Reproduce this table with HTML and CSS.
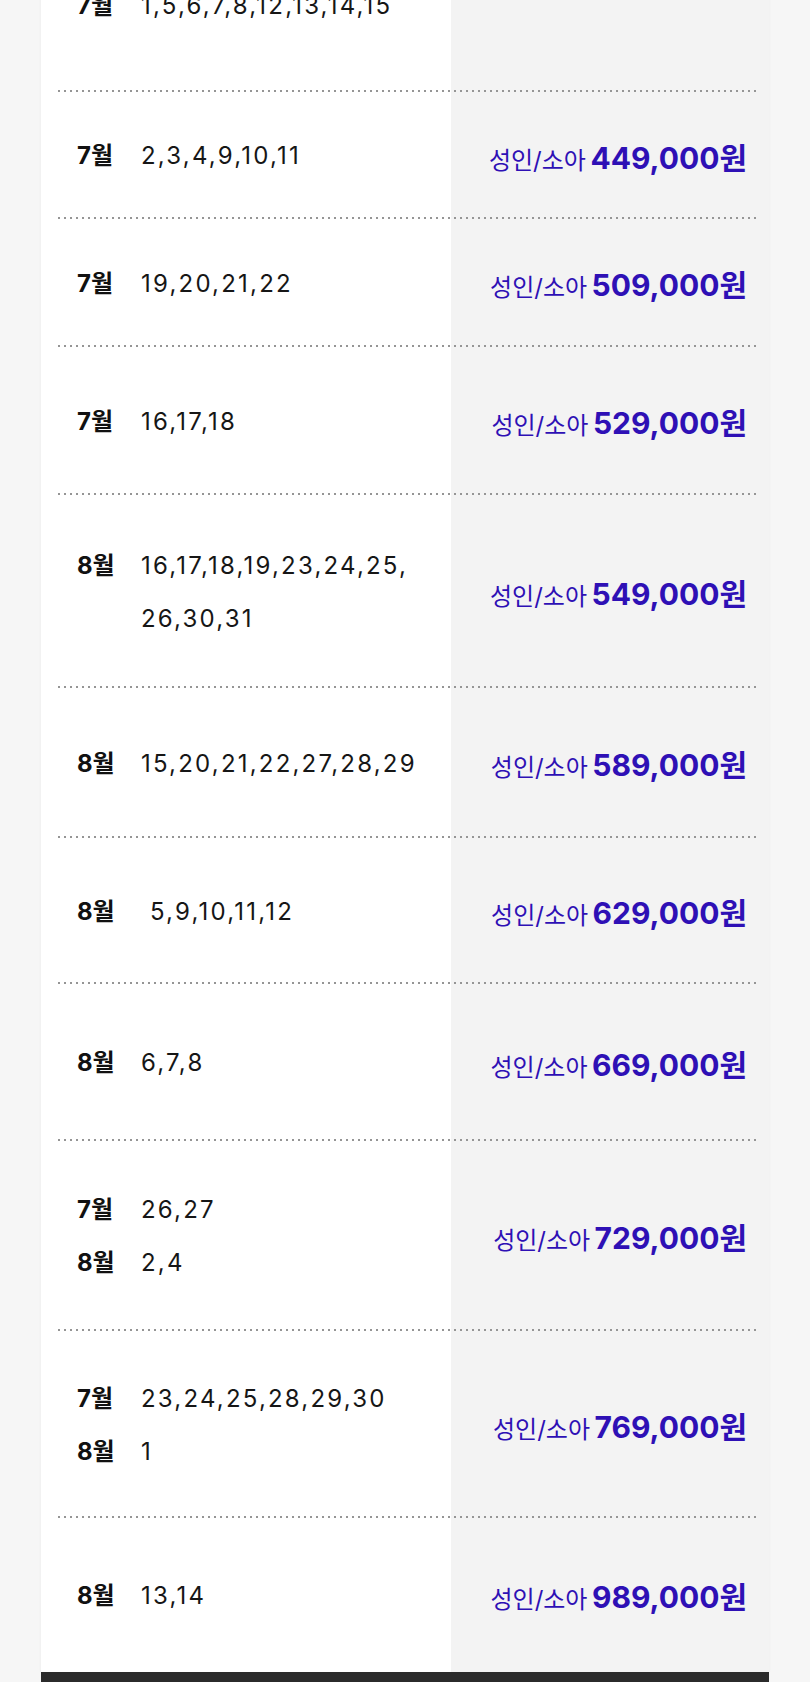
FILE: index.html
```html
<!DOCTYPE html>
<html lang="ko">
<head>
    <meta charset="UTF-8" />
    <title>출발일별 요금</title>
    <link rel="stylesheet" href="styles.css">
</head>
<body>
<div class="price-table">
    <div class="row">
        <div class="dates">
            <div class="line"><span class="mon">7월</span><span class="days">1,5,6,7,8,12,13,14,15</span></div>
        </div>
        <div class="price"></div>
    </div>
    <div class="row">
        <div class="dates">
            <div class="line"><span class="mon">7월</span><span class="days">2,3,4,9,10,11</span></div>
        </div>
        <div class="price"><span class="who">성인/소아</span> <strong>449,000원</strong></div>
    </div>
    <div class="row">
        <div class="dates">
            <div class="line"><span class="mon">7월</span><span class="days">19,20,21,22</span></div>
        </div>
        <div class="price"><span class="who">성인/소아</span> <strong>509,000원</strong></div>
    </div>
    <div class="row">
        <div class="dates">
            <div class="line"><span class="mon">7월</span><span class="days">16,17,18</span></div>
        </div>
        <div class="price"><span class="who">성인/소아</span> <strong>529,000원</strong></div>
    </div>
    <div class="row">
        <div class="dates">
            <div class="line"><span class="mon">8월</span><span class="days">16,17,18,19,23,24,25,<br>26,30,31</span></div>
        </div>
        <div class="price"><span class="who">성인/소아</span> <strong>549,000원</strong></div>
    </div>
    <div class="row">
        <div class="dates">
            <div class="line"><span class="mon">8월</span><span class="days">15,20,21,22,27,28,29</span></div>
        </div>
        <div class="price"><span class="who">성인/소아</span> <strong>589,000원</strong></div>
    </div>
    <div class="row">
        <div class="dates">
            <div class="line"><span class="mon">8월</span><span class="days">&nbsp;5,9,10,11,12</span></div>
        </div>
        <div class="price"><span class="who">성인/소아</span> <strong>629,000원</strong></div>
    </div>
    <div class="row">
        <div class="dates">
            <div class="line"><span class="mon">8월</span><span class="days">6,7,8</span></div>
        </div>
        <div class="price"><span class="who">성인/소아</span> <strong>669,000원</strong></div>
    </div>
    <div class="row">
        <div class="dates">
            <div class="line"><span class="mon">7월</span><span class="days">26,27</span></div>
            <div class="line"><span class="mon">8월</span><span class="days">2,4</span></div>
        </div>
        <div class="price"><span class="who">성인/소아</span> <strong>729,000원</strong></div>
    </div>
    <div class="row">
        <div class="dates">
            <div class="line"><span class="mon">7월</span><span class="days">23,24,25,28,29,30</span></div>
            <div class="line"><span class="mon">8월</span><span class="days">1</span></div>
        </div>
        <div class="price"><span class="who">성인/소아</span> <strong>769,000원</strong></div>
    </div>
    <div class="row">
        <div class="dates">
            <div class="line"><span class="mon">8월</span><span class="days">13,14</span></div>
        </div>
        <div class="price"><span class="who">성인/소아</span> <strong>989,000원</strong></div>
    </div>
</div>
<div class="table-end"></div>
</body>
</html>
```

FILE: styles.css
```css
body {
    margin: 0;
    background-color: #f6f6f6;
    font-family: Inter, "Noto Sans CJK KR", sans-serif;
    color: #161616;
}

.price-table {
    width: 728px;
    margin: -82px auto 0;
    background: linear-gradient(90deg, #ffffff 0 410px, #f3f3f3 410px);
    box-shadow: 0 0 3px rgba(0, 0, 0, 0.05);
}

.row {
    display: flex;
    justify-content: space-between;
    align-items: center;
    margin: 0 9px 0 15px;
    padding: 0 13px 0 21px;
    background: radial-gradient(circle, #959595 0.9px, transparent 1.3px) left bottom / 6px 2px repeat-x;
}

.row:last-child {
    background: none;
}

/* высоты строк как в исходной таблице */
.row:nth-child(1) { height: 174px; }
.row:nth-child(2) { height: 127px; }
.row:nth-child(3) { height: 128px; }
.row:nth-child(4) { height: 148px; }
.row:nth-child(5) { height: 193px; }
.row:nth-child(6) { height: 150px; }
.row:nth-child(7) { height: 146px; }
.row:nth-child(8) { height: 157px; }
.row:nth-child(9) { height: 190px; }
.row:nth-child(10) { height: 187px; }
.row:nth-child(11) { height: 154px; }

.line {
    display: flex;
    line-height: 53px;
}

.mon {
    width: 64px;
    flex: none;
    font-size: 24px;
    font-weight: 700;
    color: #111;
}

.days {
    font-size: 24px;
    letter-spacing: 2.2px;
}

.price {
    white-space: nowrap;
    color: #2e10b5;
}

.who {
    font-size: 24px;
}

.price strong {
    font-size: 30px;
    font-weight: 700;
}

.table-end {
    width: 728px;
    height: 20px;
    margin: 0 auto;
    background-color: #2b2b2b;
}
```
